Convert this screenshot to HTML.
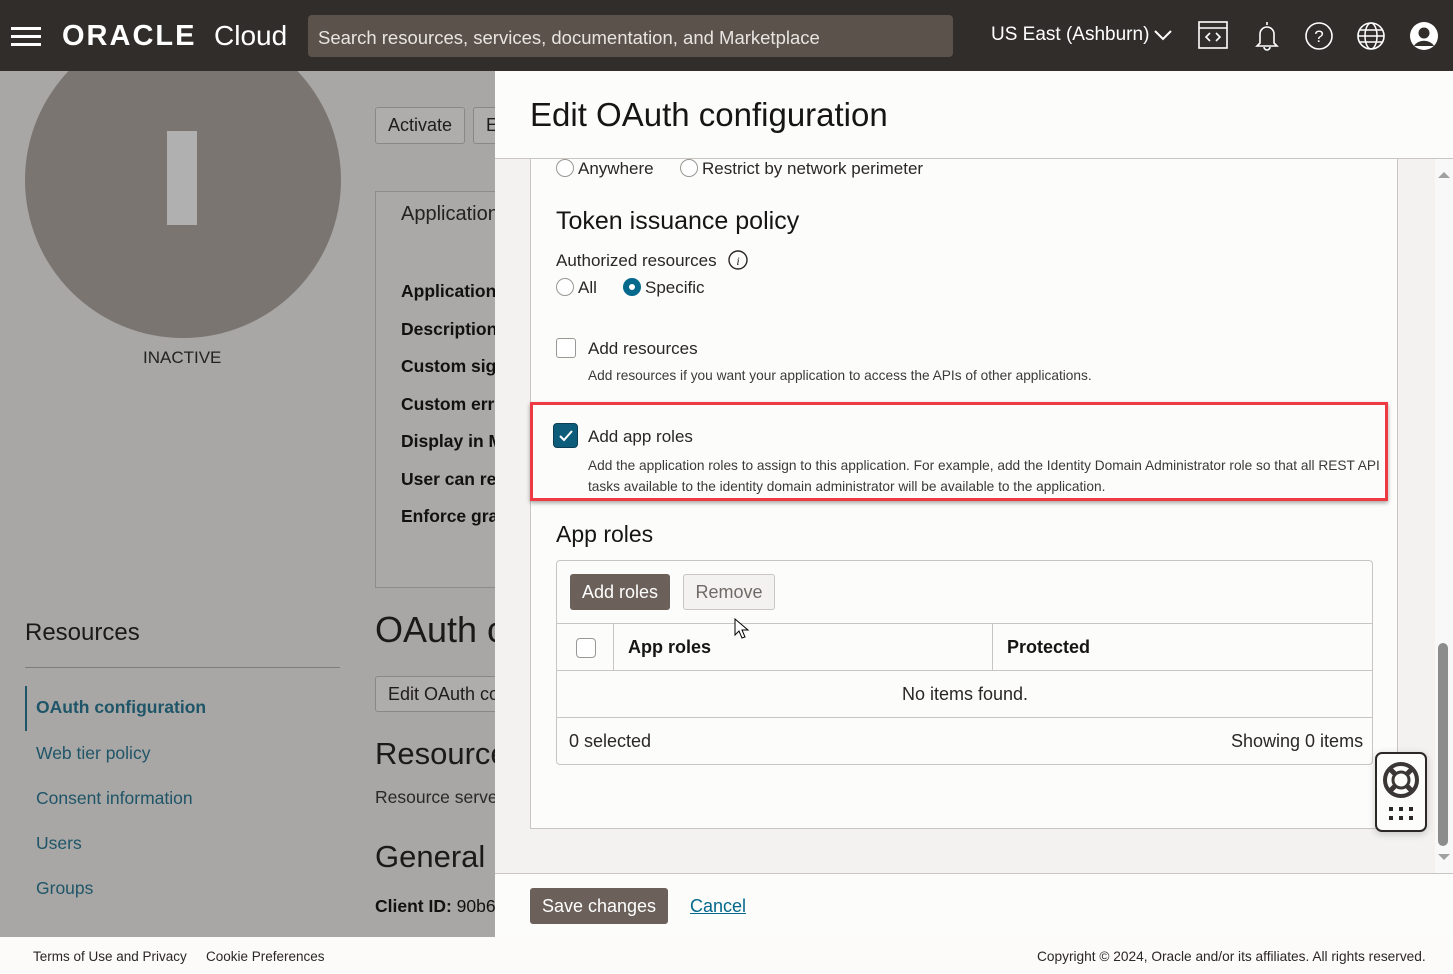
<!DOCTYPE html>
<html><head><meta charset="utf-8">
<style>
*{box-sizing:border-box;margin:0;padding:0}
body{width:1453px;height:974px;overflow:hidden;position:relative;font-family:"Liberation Sans",Arial,sans-serif;background:#a9a8a6;color:#161513}
.abs{position:absolute}
.hdr{left:0;top:0;width:1453px;height:71px;background:#312d2a;color:#fff}
.bg{left:0;top:71px;width:495px;height:866px;background:#a8a7a5;overflow:hidden}
.t{position:absolute;white-space:nowrap}
.btnbg{position:absolute;border:1px solid #8a8886;border-radius:3px;background:#aeadab;font-size:18px;padding:0 12px;line-height:35px;color:#1f1d1b;white-space:nowrap;overflow:hidden}
.drawer{left:495px;top:71px;width:958px;height:866px;background:#fcfcfb}
.foot{left:0;top:937px;width:1453px;height:37px;background:#fcfbfa;font-size:13.5px;color:#2a2725}
.radio{position:absolute;width:18px;height:18px;border:1px solid #9a9794;border-radius:50%;background:#fff}
.cb{position:absolute;width:20px;height:20px;border:1px solid #9a9794;border-radius:3px;background:#fff}
</style></head><body>

<div class="abs hdr">
  <div class="abs" style="left:11px;top:27px;width:30px;height:3px;background:#fff"></div>
  <div class="abs" style="left:11px;top:35px;width:30px;height:3px;background:#fff"></div>
  <div class="abs" style="left:11px;top:43px;width:30px;height:3px;background:#fff"></div>
  <div class="t" style="left:62px;top:20px;font-size:29px;font-weight:bold;letter-spacing:2px">ORACLE</div>
  <div class="t" style="left:214px;top:20px;font-size:28px">Cloud</div>
  <div class="abs" style="left:308px;top:15px;width:645px;height:42px;background:#5b524c;border-radius:4px"></div>
  <div class="t" style="left:318px;top:27px;font-size:18.5px;color:#e8e4e0">Search resources, services, documentation, and Marketplace</div>
  <div class="t" style="left:991px;top:24px;font-size:19px">US East (Ashburn)</div>
  <svg class="abs" style="left:1153px;top:28px" width="20" height="14"><path d="M2 3l8 8 8-8" stroke="#fff" stroke-width="2" fill="none"/></svg>
  <svg class="abs" style="left:1198px;top:20px" width="32" height="30"><rect x="1" y="2" width="28" height="26" fill="none" stroke="#fff" stroke-width="1.6"/><line x1="1" y1="8" x2="29" y2="8" stroke="#fff" stroke-width="1.6"/><path d="M12 13l-4 4 4 4M18 13l4 4-4 4" stroke="#fff" stroke-width="1.6" fill="none"/></svg>
  <svg class="abs" style="left:1252px;top:19px" width="30" height="33"><path d="M15 3v3M8 24V15a7 7 0 0 1 14 0v9l3 3H5z" stroke="#fff" stroke-width="1.6" fill="none"/><path d="M12 28a3 3 0 0 0 6 0" stroke="#fff" stroke-width="1.6" fill="none"/></svg>
  <svg class="abs" style="left:1304px;top:21px" width="30" height="30"><circle cx="15" cy="15" r="13" stroke="#fff" stroke-width="1.6" fill="none"/><text x="15" y="21" font-size="17" fill="#fff" text-anchor="middle" font-family="Liberation Sans">?</text></svg>
  <svg class="abs" style="left:1356px;top:21px" width="30" height="30"><circle cx="15" cy="15" r="13" stroke="#fff" stroke-width="1.6" fill="none"/><ellipse cx="15" cy="15" rx="6" ry="13" stroke="#fff" stroke-width="1.5" fill="none"/><path d="M2 15h26M4 9h22M4 21h22" stroke="#fff" stroke-width="1.5"/></svg>
  <svg class="abs" style="left:1409px;top:21px" width="30" height="30"><circle cx="15" cy="15" r="14" fill="#fff"/><circle cx="15" cy="12" r="5.5" fill="#312d2a"/><path d="M5 25a11 9 0 0 1 20 0" fill="#312d2a"/></svg>
</div>

<div class="abs bg">
  <div class="abs" style="left:25px;top:-49px;width:316px;height:316px;border-radius:50%;background:#7a7571"></div>
  <div class="abs" style="left:167px;top:60px;width:30px;height:94px;background:#b0b0b0"></div>
  <div class="t" style="left:143px;top:277px;font-size:17px;color:#222">INACTIVE</div>
  <div class="btnbg" style="left:375px;top:36px;height:37px">Activate</div>
  <div class="btnbg" style="left:473px;top:36px;height:37px;width:40px">E</div>
  <div class="abs" style="left:375px;top:120px;width:140px;height:397px;border:1px solid #8e8c8a;background:#aaa9a7"></div>
  <div class="t" style="left:401px;top:132px;font-size:20px;color:#222">Application</div>
  <div class="t" style="left:401px;top:202px;font-size:17.5px;font-weight:bold;color:#111;line-height:37.5px">Application<br>Description<br>Custom sig<br>Custom err<br>Display in M<br>User can re<br>Enforce gra</div>
  <div class="t" style="left:25px;top:548px;font-size:24px;color:#1c1a18">Resources</div>
  <div class="abs" style="left:25px;top:596px;width:315px;height:1px;background:#7f7d7b"></div>
  <div class="abs" style="left:25px;top:615px;width:2px;height:45px;background:#1f5568"></div>
  <div class="t" style="left:36px;top:626px;font-size:17.5px;font-weight:bold;color:#1f5568">OAuth configuration</div>
  <div class="t" style="left:36px;top:660px;font-size:17.5px;color:#1f5568;line-height:45px">Web tier policy<br>Consent information<br>Users<br>Groups</div>
  <div class="t" style="left:375px;top:538px;font-size:36px;color:#1c1a18">OAuth c</div>
  <div class="btnbg" style="left:375px;top:605px;height:36px;width:140px">Edit OAuth co</div>
  <div class="t" style="left:375px;top:665px;font-size:31px;color:#1c1a18">Resource</div>
  <div class="t" style="left:375px;top:716px;font-size:17.5px;color:#2a2826">Resource serve</div>
  <div class="t" style="left:375px;top:768px;font-size:31px;color:#1c1a18">General I</div>
  <div class="t" style="left:375px;top:825px;font-size:17.5px;color:#111"><b>Client ID:</b> 90b6</div>
</div>

<div class="abs drawer">
  <div class="t" style="left:35px;top:25px;font-size:33px;color:#161513">Edit OAuth configuration</div>
  <div class="abs" style="left:0;top:87px;width:958px;height:1px;background:#c9c6c2"></div>
  <div class="abs" style="left:0;top:88px;width:958px;height:714px;background:#f4f2f0"></div>
  <div class="abs" style="left:35px;top:88px;width:868px;height:670px;background:#fcfcfb;border:1px solid #c9c6c2;border-top:none"></div>
  <div class="abs" style="left:940px;top:88px;width:18px;height:714px;background:#f8f8f8"></div>
  <svg class="abs" style="left:941px;top:99px" width="16" height="10"><path d="M2 8l6-6 6 6z" fill="#a0a0a0"/></svg>
  <div class="abs" style="left:943px;top:572px;width:10px;height:203px;background:#8c8c8c;border-radius:5px"></div>
  <svg class="abs" style="left:941px;top:781px" width="16" height="10"><path d="M2 2l6 6 6-6z" fill="#a0a0a0"/></svg>

  <div class="radio" style="left:61px;top:88px"></div>
  <div class="t" style="left:83px;top:88px;font-size:17px;color:#2a2725">Anywhere</div>
  <div class="radio" style="left:185px;top:88px"></div>
  <div class="t" style="left:207px;top:88px;font-size:17px;color:#2a2725">Restrict by network perimeter</div>

  <div class="t" style="left:61px;top:136px;font-size:25px;color:#161513">Token issuance policy</div>
  <div class="t" style="left:61px;top:180px;font-size:17px;color:#2a2725">Authorized resources</div>
  <svg class="abs" style="left:232px;top:178px" width="22" height="22"><circle cx="11" cy="11" r="9" stroke="#2a2725" stroke-width="1.4" fill="none"/><text x="11" y="16" font-size="12" font-style="italic" text-anchor="middle" fill="#2a2725" font-family="Liberation Serif">i</text></svg>
  <div class="radio" style="left:61px;top:207px"></div>
  <div class="t" style="left:83px;top:207px;font-size:17px;color:#2a2725">All</div>
  <div class="abs" style="left:128px;top:207px;width:18px;height:18px;border-radius:50%;background:#04698c"></div>
  <div class="abs" style="left:134px;top:213px;width:6px;height:6px;border-radius:50%;background:#fff"></div>
  <div class="t" style="left:150px;top:207px;font-size:17px;color:#2a2725">Specific</div>

  <div class="cb" style="left:61px;top:267px"></div>
  <div class="t" style="left:93px;top:268px;font-size:17px;color:#2a2725">Add resources</div>
  <div class="t" style="left:93px;top:297px;font-size:13.7px;color:#3c3a38">Add resources if you want your application to access the APIs of other applications.</div>

  <div class="abs" style="left:35px;top:331px;width:858px;height:99px;border:3px solid #ee3b43;box-shadow:0 2px 4px rgba(0,0,0,.35)"></div>
  <div class="abs" style="left:58px;top:352px;width:25px;height:25px;border-radius:4px;background:#0d5d7a;border:1px solid #0a3f55"></div>
  <svg class="abs" style="left:61px;top:355px" width="20" height="20"><path d="M4 10l4 4 8-9" stroke="#fff" stroke-width="2" fill="none"/></svg>
  <div class="t" style="left:93px;top:356px;font-size:17px;color:#2a2725">Add app roles</div>
  <div class="t" style="left:93px;top:384px;font-size:13.7px;color:#3c3a38;line-height:21px">Add the application roles to assign to this application. For example, add the Identity Domain Administrator role so that all REST API<br>tasks available to the identity domain administrator will be available to the application.</div>

  <div class="t" style="left:61px;top:450px;font-size:23px;color:#161513">App roles</div>
  <div class="abs" style="left:61px;top:489px;width:817px;height:205px;border:1px solid #c9c6c2;border-radius:4px;background:#fcfcfb"></div>
  <div class="abs" style="left:75px;top:503px;width:100px;height:36px;background:#6b605a;border-radius:3px;color:#fff;font-size:18px;text-align:center;line-height:36px">Add roles</div>
  <div class="abs" style="left:188px;top:503px;width:92px;height:36px;background:#f4f2f0;border:1px solid #c9c6c2;border-radius:3px;color:#6f6a66;font-size:18px;text-align:center;line-height:34px">Remove</div>
  <div class="abs" style="left:62px;top:552px;width:815px;height:1px;background:#c9c6c2"></div>
  <div class="abs" style="left:62px;top:599px;width:815px;height:1px;background:#c9c6c2"></div>
  <div class="abs" style="left:62px;top:646px;width:815px;height:1px;background:#c9c6c2"></div>
  <div class="abs" style="left:118px;top:553px;width:1px;height:46px;background:#c9c6c2"></div>
  <div class="abs" style="left:497px;top:553px;width:1px;height:46px;background:#c9c6c2"></div>
  <div class="cb" style="left:81px;top:567px;border-radius:4px"></div>
  <div class="t" style="left:133px;top:566px;font-size:18px;font-weight:bold">App roles</div>
  <div class="t" style="left:512px;top:566px;font-size:18px;font-weight:bold">Protected</div>
  <div class="t" style="left:407px;top:613px;font-size:18px;color:#2a2725">No items found.</div>
  <div class="t" style="left:74px;top:660px;font-size:18px;color:#2a2725">0 selected</div>
  <div class="t" style="left:736px;top:660px;font-size:18px;color:#2a2725">Showing 0 items</div>
  <svg class="abs" style="left:239px;top:547px" width="16" height="22"><path d="M1 1v16l4-4 3 7 3-1-3-7h6z" fill="#fff" stroke="#000" stroke-width="1"/></svg>

  <div class="abs" style="left:880px;top:681px;width:52px;height:80px;background:#fcfcfb;border:2px solid #2a2725;border-radius:7px;box-shadow:0 2px 8px rgba(0,0,0,.2)"></div>
  <svg class="abs" style="left:886px;top:689px" width="40" height="40"><circle cx="20" cy="20" r="16" stroke="#3a3633" stroke-width="4" fill="none"/><circle cx="20" cy="20" r="8" stroke="#3a3633" stroke-width="3" fill="none"/><path d="M9 9l6 6M31 9l-6 6M9 31l6-6M31 31l-6-6" stroke="#3a3633" stroke-width="5"/></svg>
  <svg class="abs" style="left:893px;top:735px" width="28" height="16"><g fill="#2a2725"><rect x="1" y="1" width="4" height="4"/><rect x="11" y="1" width="4" height="4"/><rect x="21" y="1" width="4" height="4"/><rect x="1" y="10" width="4" height="4"/><rect x="11" y="10" width="4" height="4"/><rect x="21" y="10" width="4" height="4"/></g></svg>

  <div class="abs" style="left:0;top:802px;width:958px;height:1px;background:#c9c6c2"></div>
  <div class="abs" style="left:35px;top:817px;width:138px;height:36px;background:#6b605a;border-radius:3px;color:#fff;font-size:18px;text-align:center;line-height:36px">Save changes</div>
  <div class="t" style="left:195px;top:825px;font-size:18px;color:#04698c;text-decoration:underline">Cancel</div>
</div>

<div class="abs foot">
  <div class="t" style="left:33px;top:12px">Terms of Use and Privacy</div>
  <div class="t" style="left:206px;top:12px">Cookie Preferences</div>
  <div class="t" style="left:1037px;top:12px;font-size:13.7px">Copyright © 2024, Oracle and/or its affiliates. All rights reserved.</div>
</div>
</body></html>
